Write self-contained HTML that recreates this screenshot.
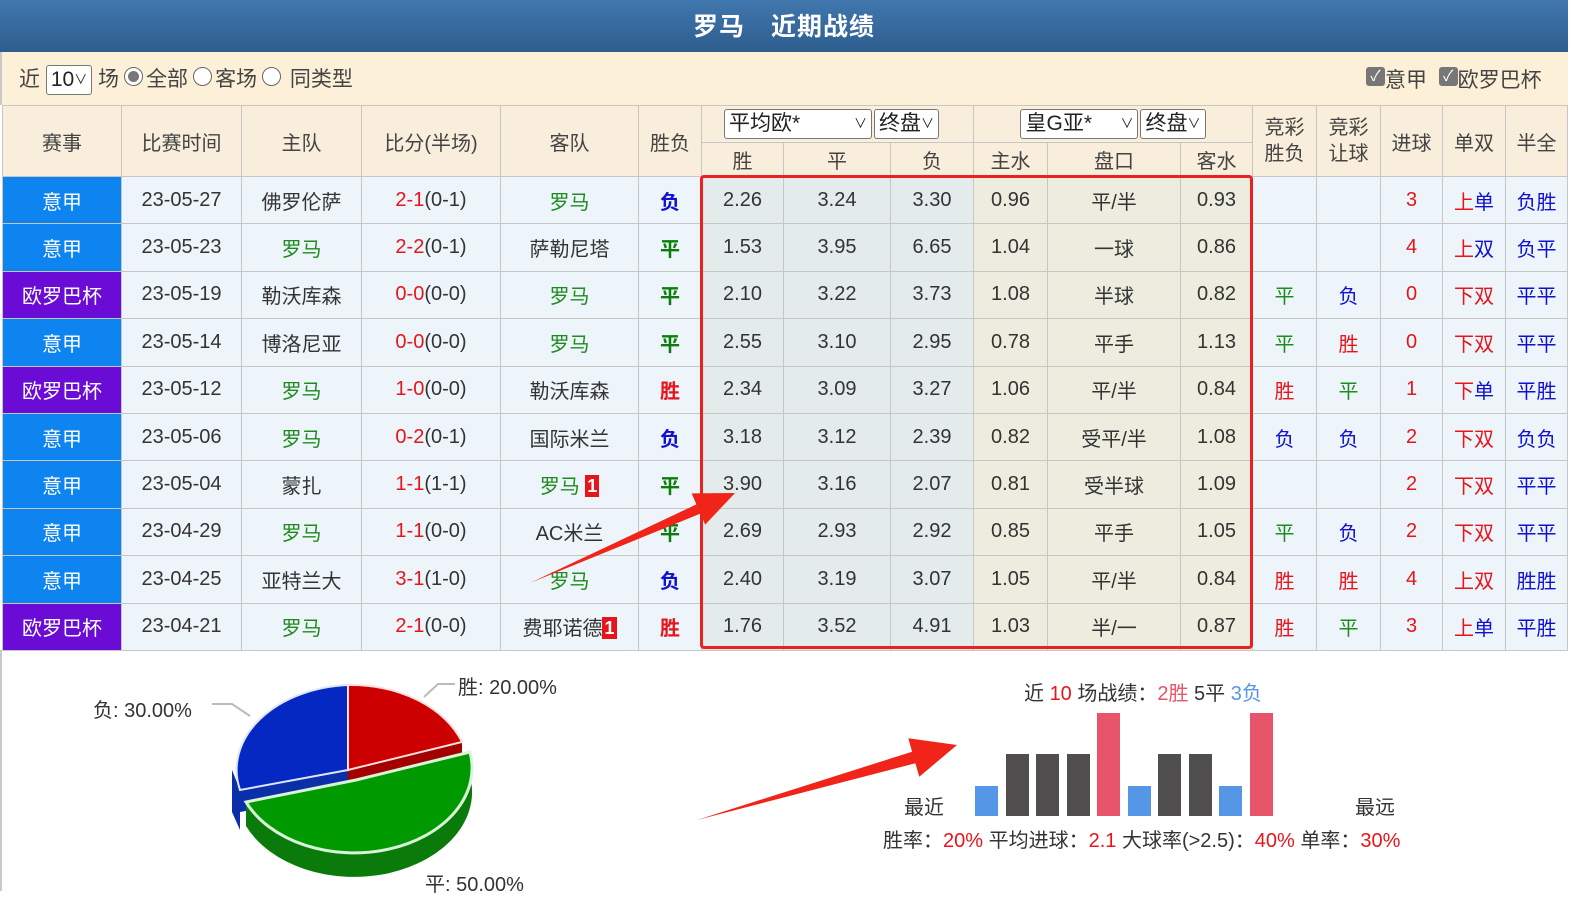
<!DOCTYPE html>
<html><head><meta charset="utf-8">
<style>
*{margin:0;padding:0;box-sizing:border-box}
body{width:1593px;height:891px;overflow:hidden;background:#fff;font-family:"Liberation Sans","Noto Sans CJK SC",sans-serif;color:#333;position:relative}
#title{position:absolute;left:0;top:0;width:1568px;height:52px;background:linear-gradient(#4077ae,#2e5d8e);color:#fff;font-weight:bold;font-size:25px;text-align:center;line-height:54px;letter-spacing:1px}
#filter{position:absolute;left:0;top:52px;width:1568px;height:53px;background:#fdf0d8;border-left:2px solid #c9c9c9;font-size:21px;color:#444}
.sel{display:inline-block;border:1px solid #777;border-radius:3px;background:#fff;height:30px;line-height:28px;padding:0 4px;font-size:21px;color:#222;vertical-align:middle}
.ch{font-size:13px;position:relative;top:-2px}
.radio{display:inline-block;width:19px;height:19px;border:1px solid #666;border-radius:50%;background:#fff;vertical-align:middle;position:relative;top:-4px;margin:0 3px 0 5px}
.radio.on::after{content:"";position:absolute;left:3px;top:3px;width:11px;height:11px;border-radius:50%;background:#777}
.cb{display:inline-block;width:19px;height:19px;background:#777;border-radius:3px;color:#fff;font-size:15px;line-height:19px;text-align:center;vertical-align:middle;position:relative;top:-5px}
table{position:absolute;left:2px;top:105px;border-collapse:collapse;table-layout:fixed;font-size:20px}
td{border:1px solid #c6c6c6;text-align:center;white-space:nowrap;overflow:hidden;padding:0}
tr.h td{background:#f9eedb;color:#444}
tr.d td{height:47.4px;background:#eef5fa}
tr.d td.o{background:#e3ebeb}
tr.d td.a{background:#ecedde}
td.yj{background:#0d84ef!important;color:#fff}
td.oz{background:#6a0cd6!important;color:#fff}
.r{color:#e8141b}.g{color:#1f8a1f}.b{color:#1010d0}.gg{color:#0a7d0a}
.bd{font-weight:bold}
.n1{display:inline-block;background:#e8141b;color:#fff;font-size:18px;line-height:22px;padding:0 2px;font-weight:bold;vertical-align:middle;position:relative;top:-2px}
#box{position:absolute;left:700px;top:175px;width:553px;height:474px;border:3px solid #e8221e;border-radius:4px}
#bottom{position:absolute;left:0;top:650px;width:1568px;height:241px;border-left:2px solid #c9c9c9}
.t{position:absolute;font-size:20px;color:#333;white-space:nowrap}
</style></head><body>
<div id="title">罗马　近期战绩</div>
<div id="filter">
 <div style="position:absolute;left:17px;top:11px">近 <span class="sel">10<span class="ch">∨</span></span> 场<span class="radio on"></span>全部<span class="radio"></span>客场<span class="radio"></span> 同类型</div>
 <div style="position:absolute;left:1364px;top:12px"><span class="cb">✓</span>意甲 &nbsp;<span class="cb">✓</span>欧罗巴杯</div>
</div>
<table>
<colgroup><col style="width:119px"><col style="width:120px"><col style="width:120px"><col style="width:139px"><col style="width:138px"><col style="width:63px"><col style="width:82px"><col style="width:107px"><col style="width:83px"><col style="width:74px"><col style="width:133px"><col style="width:72px"><col style="width:64px"><col style="width:64px"><col style="width:62px"><col style="width:63px"><col style="width:62px"></colgroup>
<tr class="h" style="height:37px"><td rowspan="2">赛事</td><td rowspan="2">比赛时间</td><td rowspan="2">主队</td><td rowspan="2">比分(半场)</td><td rowspan="2">客队</td><td rowspan="2">胜负</td>
<td colspan="3" style="text-align:left;padding-left:22px"><span class="sel" style="width:148px;text-align:left">平均欧*<span class="ch" style="float:right;top:0">∨</span></span><span class="sel" style="margin-left:2px">终盘<span class="ch">∨</span></span></td>
<td colspan="3"><span class="sel" style="width:118px;text-align:left">皇G亚*<span class="ch" style="float:right;top:0">∨</span></span><span class="sel" style="margin-left:2px">终盘<span class="ch">∨</span></span></td>
<td rowspan="2" style="line-height:26px">竞彩<br>胜负</td><td rowspan="2" style="line-height:26px">竞彩<br>让球</td><td rowspan="2">进球</td><td rowspan="2">单双</td><td rowspan="2">半全</td></tr>
<tr class="h" style="height:34px"><td>胜</td><td>平</td><td>负</td><td>主水</td><td>盘口</td><td>客水</td></tr>

<tr class="d"><td class="yj">意甲</td><td>23-05-27</td><td>佛罗伦萨</td><td><span class="r">2-1</span>(0-1)</td><td class="g">罗马</td><td class="b bd">负</td><td class="o">2.26</td><td class="o">3.24</td><td class="o">3.30</td><td class="a">0.96</td><td class="a">平/半</td><td class="a">0.93</td><td></td><td></td><td class="r">3</td><td><span class="r">上</span><span class="b">单</span></td><td class="b">负胜</td></tr>
<tr class="d"><td class="yj">意甲</td><td>23-05-23</td><td class="g">罗马</td><td><span class="r">2-2</span>(0-1)</td><td>萨勒尼塔</td><td class="gg bd">平</td><td class="o">1.53</td><td class="o">3.95</td><td class="o">6.65</td><td class="a">1.04</td><td class="a">一球</td><td class="a">0.86</td><td></td><td></td><td class="r">4</td><td><span class="r">上</span><span class="b">双</span></td><td class="b">负平</td></tr>
<tr class="d"><td class="oz">欧罗巴杯</td><td>23-05-19</td><td>勒沃库森</td><td><span class="r">0-0</span>(0-0)</td><td class="g">罗马</td><td class="gg bd">平</td><td class="o">2.10</td><td class="o">3.22</td><td class="o">3.73</td><td class="a">1.08</td><td class="a">半球</td><td class="a">0.82</td><td class="g">平</td><td class="b">负</td><td class="r">0</td><td><span class="r">下</span><span class="r">双</span></td><td class="b">平平</td></tr>
<tr class="d"><td class="yj">意甲</td><td>23-05-14</td><td>博洛尼亚</td><td><span class="r">0-0</span>(0-0)</td><td class="g">罗马</td><td class="gg bd">平</td><td class="o">2.55</td><td class="o">3.10</td><td class="o">2.95</td><td class="a">0.78</td><td class="a">平手</td><td class="a">1.13</td><td class="g">平</td><td class="r">胜</td><td class="r">0</td><td><span class="r">下</span><span class="r">双</span></td><td class="b">平平</td></tr>
<tr class="d"><td class="oz">欧罗巴杯</td><td>23-05-12</td><td class="g">罗马</td><td><span class="r">1-0</span>(0-0)</td><td>勒沃库森</td><td class="r bd">胜</td><td class="o">2.34</td><td class="o">3.09</td><td class="o">3.27</td><td class="a">1.06</td><td class="a">平/半</td><td class="a">0.84</td><td class="r">胜</td><td class="g">平</td><td class="r">1</td><td><span class="r">下</span><span class="b">单</span></td><td class="b">平胜</td></tr>
<tr class="d"><td class="yj">意甲</td><td>23-05-06</td><td class="g">罗马</td><td><span class="r">0-2</span>(0-1)</td><td>国际米兰</td><td class="b bd">负</td><td class="o">3.18</td><td class="o">3.12</td><td class="o">2.39</td><td class="a">0.82</td><td class="a">受平/半</td><td class="a">1.08</td><td class="b">负</td><td class="b">负</td><td class="r">2</td><td><span class="r">下</span><span class="r">双</span></td><td class="b">负负</td></tr>
<tr class="d"><td class="yj">意甲</td><td>23-05-04</td><td>蒙扎</td><td><span class="r">1-1</span>(1-1)</td><td class="g">罗马 <span class="n1">1</span></td><td class="gg bd">平</td><td class="o">3.90</td><td class="o">3.16</td><td class="o">2.07</td><td class="a">0.81</td><td class="a">受半球</td><td class="a">1.09</td><td></td><td></td><td class="r">2</td><td><span class="r">下</span><span class="r">双</span></td><td class="b">平平</td></tr>
<tr class="d"><td class="yj">意甲</td><td>23-04-29</td><td class="g">罗马</td><td><span class="r">1-1</span>(0-0)</td><td>AC米兰</td><td class="gg bd">平</td><td class="o">2.69</td><td class="o">2.93</td><td class="o">2.92</td><td class="a">0.85</td><td class="a">平手</td><td class="a">1.05</td><td class="g">平</td><td class="b">负</td><td class="r">2</td><td><span class="r">下</span><span class="r">双</span></td><td class="b">平平</td></tr>
<tr class="d"><td class="yj">意甲</td><td>23-04-25</td><td>亚特兰大</td><td><span class="r">3-1</span>(1-0)</td><td class="g">罗马</td><td class="b bd">负</td><td class="o">2.40</td><td class="o">3.19</td><td class="o">3.07</td><td class="a">1.05</td><td class="a">平/半</td><td class="a">0.84</td><td class="r">胜</td><td class="r">胜</td><td class="r">4</td><td><span class="r">上</span><span class="r">双</span></td><td class="b">胜胜</td></tr>
<tr class="d"><td class="oz">欧罗巴杯</td><td>23-04-21</td><td class="g">罗马</td><td><span class="r">2-1</span>(0-0)</td><td>费耶诺德<span class="n1">1</span></td><td class="r bd">胜</td><td class="o">1.76</td><td class="o">3.52</td><td class="o">4.91</td><td class="a">1.03</td><td class="a">半/一</td><td class="a">0.87</td><td class="r">胜</td><td class="g">平</td><td class="r">3</td><td><span class="r">上</span><span class="b">单</span></td><td class="b">平胜</td></tr>
</table>
<div id="box"></div>
<div id="bottom"></div>
<svg style="position:absolute;left:0;top:0" width="1593" height="891">
 <!-- pie depth -->
 <path d="M348,770 L240,790 L240,812 L348,792 Z" fill="#0a2fa8"/>
 <path d="M232,770 L240,790 L240,830 L232,812 Z" fill="#0a2fa8"/>
 <path d="M348,770 L462,742 L462,762 L348,790 Z" fill="#a30000"/>
 <path d="M348,770 L240,790 A118,85 0 0,1 348,685 Z" fill="#0628c2" stroke="#dfe6ff" stroke-width="2"/>
 <path d="M348,770 L348,685 A118,85 0 0,1 462,742 Z" fill="#cc0000" stroke="#ffdede" stroke-width="2"/>
 <path d="M470,752 A118,85 0 0,1 246,802 L246,826 A118,85 0 0,0 470,776 Z" fill="#0a7a0a"/>
 <path d="M356,780 L470,752 A118,85 0 0,1 246,802 Z" fill="#009900" stroke="#d8f5d8" stroke-width="3"/>
 <polyline points="212,704 232,704 250,716" stroke="#bbb" stroke-width="2" fill="none"/>
 <polyline points="455,684 438,684 424,697" stroke="#bbb" stroke-width="2" fill="none"/>
 <!-- bars -->
 <g>
 <rect x="975" y="786" width="23" height="30" fill="#5596e6"/>
 <rect x="1006" y="754" width="23" height="62" fill="#4f4d4e"/>
 <rect x="1036" y="754" width="23" height="62" fill="#4f4d4e"/>
 <rect x="1067" y="754" width="23" height="62" fill="#4f4d4e"/>
 <rect x="1097" y="713" width="23" height="103" fill="#e8546a"/>
 <rect x="1128" y="786" width="23" height="30" fill="#5596e6"/>
 <rect x="1158" y="754" width="23" height="62" fill="#4f4d4e"/>
 <rect x="1189" y="754" width="23" height="62" fill="#4f4d4e"/>
 <rect x="1219" y="786" width="23" height="30" fill="#5596e6"/>
 <rect x="1250" y="713" width="23" height="103" fill="#e8546a"/>
 </g>
 <!-- arrows -->
 <polygon points="530,583 700.4,513.6 705.2,524.6 735,493 691.6,493.4 696.4,504.4" fill="#f02418"/>
 <polygon points="697,820 915.4,763.3 919.3,776.7 957,745 908.3,738.3 912.1,751.7" fill="#f02418"/>
</svg>
<div class="t" style="left:93px;top:694px">负: 30.00%</div>
<div class="t" style="left:458px;top:671px">胜: 20.00%</div>
<div class="t" style="left:425px;top:868px">平: 50.00%</div>
<div class="t" style="left:1024px;top:677px">近 <span class="r">10</span> 场战绩：<span style="color:#e8546a">2胜</span> 5平 <span style="color:#5596e6">3负</span></div>
<div class="t" style="left:904px;top:791px">最近</div>
<div class="t" style="left:1355px;top:791px">最远</div>
<div class="t" style="left:883px;top:824px">胜率：<span class="r">20%</span> 平均进球：<span class="r">2.1</span> 大球率(&gt;2.5)：<span class="r">40%</span> 单率：<span class="r">30%</span></div>
</body></html>
